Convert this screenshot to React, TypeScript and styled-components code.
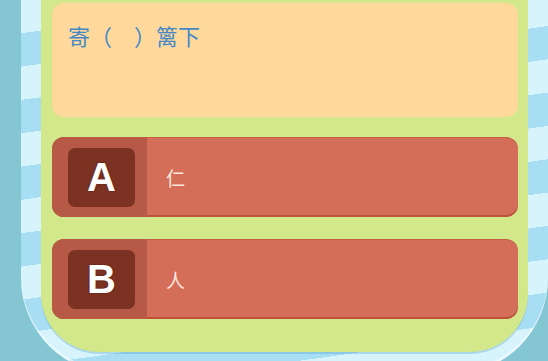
import React from "react";
import styled, { createGlobalStyle } from "styled-components";

const GlobalStyle = createGlobalStyle`
    html, body {
        margin: 0;
        padding: 0;
        background: #85c6d3;
    }
    body {
        font-family: "Noto Sans CJK SC", "Noto Sans", sans-serif;
    }
`;

const options = [
    { key: "A", text: "仁" },
    { key: "B", text: "人" },
];

const App = () => {
    return (
        <Page>
            <GlobalStyle />
            <Frame>
                <Panel>
                    <Question>寄（　）篱下</Question>
                    {options.map((o) => (
                        <Option key={o.key}>
                            <KeyArea>
                                <KeyBox>{o.key}</KeyBox>
                            </KeyArea>
                            <Answer>{o.text}</Answer>
                        </Option>
                    ))}
                </Panel>
            </Frame>
        </Page>
    );
};

export default App;

const Page = styled.div`
    width: 548px;
    height: 361px;
    overflow: hidden;
    background: #85c6d3;
    padding-left: 21px;
    box-sizing: border-box;
`;

const Frame = styled.div`
    width: 527px;
    box-sizing: border-box;
    padding: 0 20px 22px 20px;
    border-radius: 0 0 96px 96px;
    background: repeating-linear-gradient(
        172deg,
        #d7f4fd 0px,
        #d7f4fd 33px,
        #a7def4 33px,
        #a7def4 66px
    );
    box-shadow: inset 0 -3px 0 rgba(255, 255, 255, 0.5);
`;

const Panel = styled.div`
    background: #d3e78b;
    border-radius: 0 0 58px 58px;
    padding: 3px 10px 33px 11px;
    display: flex;
    flex-direction: column;
    gap: 20px;
    box-shadow: 0 2px 0 rgba(90, 160, 200, 0.35);
`;

const Question = styled.div`
    height: 114px;
    box-sizing: border-box;
    background: #fed99b;
    border-radius: 12px;
    padding: 20px 16px;
    color: #4689c6;
    font-size: 22px;
    font-weight: 400;
    line-height: 24px;
    font-family: "Noto Sans CJK SC", sans-serif;
`;

const Option = styled.div`
    height: 80px;
    display: flex;
    background: #d46e58;
    border-radius: 12px;
    overflow: hidden;
    box-shadow: inset 0 -2px 0 rgba(170, 60, 35, 0.55),
        inset 0 1px 0 rgba(170, 60, 35, 0.35);
    & + & {
        margin-top: 2px;
    }
`;

const KeyArea = styled.div`
    width: 95px;
    background: #b65946;
    display: flex;
    align-items: center;
    padding-left: 16px;
    box-sizing: border-box;
`;

const KeyBox = styled.div`
    width: 67px;
    height: 59px;
    border-radius: 7px;
    background: #7b3222;
    color: #fff;
    display: flex;
    align-items: center;
    justify-content: center;
    font-family: "Liberation Sans", "DejaVu Sans", sans-serif;
    font-weight: bold;
    font-size: 40px;
    text-shadow: 0 0 2px rgba(60, 20, 10, 0.7);
    margin-top: 1px;
`;

const Answer = styled.div`
    display: flex;
    align-items: center;
    padding-left: 19px;
    color: #fde6de;
    font-size: 19px;
    font-family: "Noto Sans CJK SC", sans-serif;
`;
